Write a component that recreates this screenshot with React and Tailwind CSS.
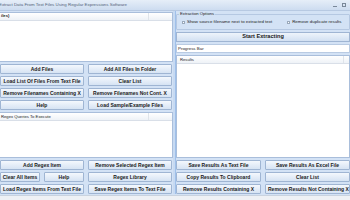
import React from 'react';

const font = { fontFamily: '"Liberation Sans", Arial, sans-serif' };

const Btn = ({ children, className = '' }) => (
  <button
    className={`h-[10px] flex items-center justify-center whitespace-nowrap overflow-hidden text-[5px] font-bold text-[#1a1a1a] border border-[#9fb5d3] rounded-[1px] bg-gradient-to-b from-[#f4f8fd] to-[#d6e3f3] leading-none ${className}`}
  >
    {children}
  </button>
);

const ListHeader = ({ children }) => (
  <div className="h-[8px] flex items-center border-b border-[#d9dfe8] bg-gradient-to-b from-white to-[#eef2f7] text-[4.2px] text-[#222] leading-none">
    <span className="pl-[1px] flex-1 truncate">{children}</span>
    <span className="w-[24px] h-full border-l border-[#dfe4ea]" />
  </div>
);

export default function App() {
  return (
    <div className="w-[350px] h-[200px] overflow-hidden flex flex-col bg-[#d3e2f5]" style={font}>
      {/* title bar */}
      <div className="h-[11px] flex items-center justify-between bg-gradient-to-b from-[#e6eef8] to-[#cddcf0] border-b border-[#b7c9e2]">
        <span className="text-[4.4px] text-[#55657a] leading-none -ml-[1px] whitespace-nowrap">
          Extract Data From Text Files Using Regular Expressions Software
        </span>
        <div className="flex items-center gap-[5px] pr-[4px]">
          <span className="w-[4px] h-[1px] bg-[#7a8899] mt-[3px]" />
          <span className="w-[4px] h-[4px] border border-[#7a8899]" />
        </div>
      </div>

      <div className="flex-1 flex min-h-0">
        {/* left panel */}
        <div className="w-[173px] flex flex-col">
          <div className="h-[51px] mt-[1px] bg-white border border-[#a9bedb] border-l-0 flex flex-col">
            <ListHeader>
              <span className="font-bold">iles)</span>
            </ListHeader>
          </div>
          <div className="grid grid-cols-2 gap-x-[4px] gap-y-[2px] mt-[2px] pr-[1px]">
            <Btn>Add Files</Btn>
            <Btn>Add All Files In Folder</Btn>
            <Btn>Load List Of Files From Text File</Btn>
            <Btn>Clear List</Btn>
            <Btn>Remove Filenames Containing X</Btn>
            <Btn>Remove Filenames Not Cont. X</Btn>
            <Btn>Help</Btn>
            <Btn>Load Sample/Example Files</Btn>
          </div>
          <div className="h-[46px] mt-[2px] bg-white border border-[#a9bedb] border-l-0 flex flex-col">
            <ListHeader>Regex Queries To Execute</ListHeader>
          </div>
          <div className="grid grid-cols-2 gap-x-[4px] gap-y-[2px] mt-[2px] pr-[1px]">
            <Btn>Add Regex Item</Btn>
            <Btn>Remove Selected Regex Item</Btn>
            <div className="grid grid-cols-2 gap-x-[4px]">
              <Btn>Clear All Items</Btn>
              <Btn>Help</Btn>
            </div>
            <Btn>Regex Library</Btn>
            <Btn>Load Regex Items From Text File</Btn>
            <Btn>Save Regex Items To Text File</Btn>
          </div>
        </div>

        {/* splitter */}
        <div className="w-[3px] bg-[#c7daf2] border-r border-[#9fc0ea]" />

        {/* right panel */}
        <div className="flex-1 flex flex-col">
          <div className="h-[16px] border border-[#b5c8e2] rounded-[1px] relative mt-[3px]">
            <span className="absolute -top-[3px] left-[2px] bg-[#d3e2f5] px-[1px] text-[4.2px] text-[#222] leading-none">
              Extraction Options
            </span>
            <div className="flex items-center h-full pt-[1px] text-[4.4px] text-[#222] leading-none">
              <span className="ml-[5px] w-[3px] h-[3px] border border-[#9aa9bb] bg-white" />
              <span className="ml-[2px] whitespace-nowrap">Show source filename next to extracted text</span>
              <span className="ml-[15px] w-[3px] h-[3px] border border-[#9aa9bb] bg-white" />
              <span className="ml-[2px] whitespace-nowrap">Remove duplicate results</span>
            </div>
          </div>
          <div className="mt-[2px] h-[11px] flex items-center justify-center border border-[#9fb5d3] bg-gradient-to-b from-[#eef4fb] to-[#d2e0f2] text-[5.6px] font-bold text-[#1a1a1a] leading-none">
            Start Extracting
          </div>
          <div className="mt-[2px] h-[9px] flex items-center bg-white border border-[#b9cbe3] text-[4.4px] text-[#222] leading-none pl-[1px]">
            Progress Bar
          </div>
          <div className="mt-[2px] h-[106px] bg-white border border-[#a9bedb] flex flex-col">
            <div className="h-[8px] flex items-center border-b border-[#d9dfe8] bg-gradient-to-b from-white to-[#eef2f7] text-[4.2px] text-[#222] leading-none">
              <span className="pl-[3px] flex-1">Results</span>
              <span className="w-[6px] h-full border-l border-[#dfe4ea]" />
            </div>
          </div>
          <div className="grid grid-cols-2 gap-x-[4px] gap-y-[2px] mt-[2px]">
            <Btn>Save Results As Text File</Btn>
            <Btn>Save Results As Excel File</Btn>
            <Btn>Copy Results To Clipboard</Btn>
            <Btn>Clear List</Btn>
            <Btn>Remove Results Containing X</Btn>
            <Btn className="justify-start pl-[2px]">Remove Results Not Containing X</Btn>
          </div>
        </div>
      </div>

      {/* status strip */}
      <div className="h-[5px] mt-[1px] bg-[#eef1f5] border-t border-[#c9d3df]" />
    </div>
  );
}
